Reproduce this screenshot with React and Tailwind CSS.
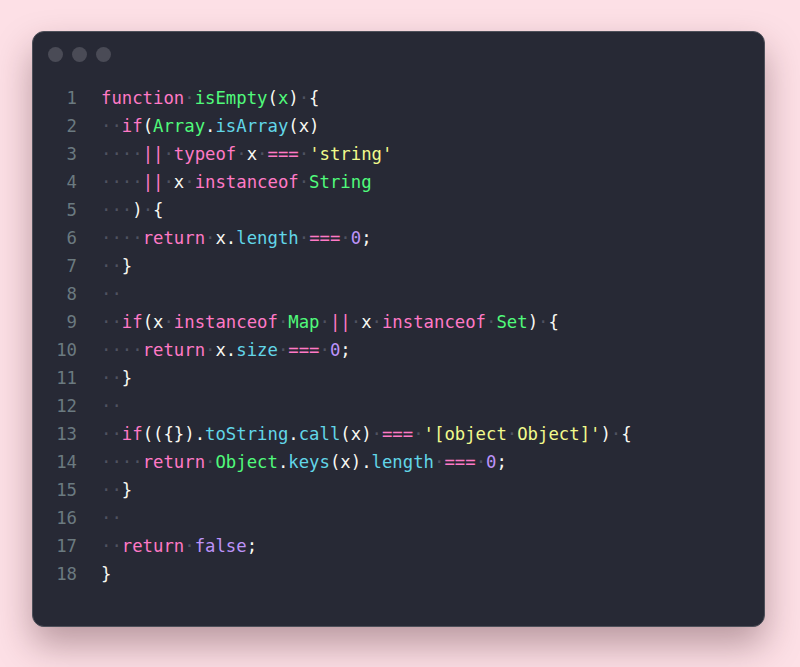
import React from "react";

const P = "#ff79c6";
const G = "#50fa7b";
const C = "#62d6e8";
const Y = "#f1fa8c";
const V = "#bd93f9";
const W = "#f8f8f2";

// each line: list of [text, color]
const lines = [
  [["function", P], [" ", W], ["isEmpty", G], ["(", W], ["x", G], [")", W], [" ", W], ["{", W]],
  [["  ", W], ["if", P], ["(", W], ["Array", G], [".", W], ["isArray", C], ["(x)", W]],
  [["    ", W], ["||", P], [" ", W], ["typeof", P], [" x ", W], ["===", P], [" ", W], ["'string'", Y]],
  [["    ", W], ["||", P], [" x ", W], ["instanceof", P], [" ", W], ["String", G]],
  [["   ) {", W]],
  [["    ", W], ["return", P], [" x.", W], ["length", C], [" ", W], ["===", P], [" ", W], ["0", V], [";", W]],
  [["  }", W]],
  [["  ", W]],
  [["  ", W], ["if", P], ["(x ", W], ["instanceof", P], [" ", W], ["Map", G], [" ", W], ["||", P], [" x ", W], ["instanceof", P], [" ", W], ["Set", G], [") {", W]],
  [["    ", W], ["return", P], [" x.", W], ["size", C], [" ", W], ["===", P], [" ", W], ["0", V], [";", W]],
  [["  }", W]],
  [["  ", W]],
  [["  ", W], ["if", P], ["(({}).", W], ["toString", C], [".", W], ["call", C], ["(x) ", W], ["===", P], [" ", W], ["'[object Object]'", Y], [") {", W]],
  [["    ", W], ["return", P], [" ", W], ["Object", G], [".", W], ["keys", C], ["(x).", W], ["length", C], [" ", W], ["===", P], [" ", W], ["0", V], [";", W]],
  [["  }", W]],
  [["  ", W]],
  [["  ", W], ["return", P], [" ", W], ["false", V], [";", W]],
  [["}", W]],
];

function Segment({ text, color }) {
  // spaces become faint middle dots
  const parts = text.split(/( )/);
  return parts.map((p, i) =>
    p === " " ? (
      <span key={i} className="text-[#4f5261]">·</span>
    ) : (
      <span key={i} style={{ color }}>{p}</span>
    )
  );
}

export default function App() {
  return (
    <div className="min-h-[667px] w-[800px] bg-[#fde0e6] pt-[31px] pl-[32px]">
      <div className="w-[733px] h-[596px] rounded-[12px] bg-[#272935] border border-[#4e505a] shadow-[0_18px_36px_rgba(60,20,30,0.35)] flex flex-col">
        <div className="flex gap-[9px] pl-[15px] pt-[15px]">
          <div className="w-[15px] h-[15px] rounded-full bg-[#4a4b56]" />
          <div className="w-[15px] h-[15px] rounded-full bg-[#4a4b56]" />
          <div className="w-[15px] h-[15px] rounded-full bg-[#4a4b56]" />
        </div>
        <div
          className="mt-[22px] text-[17.3px] leading-[28px]"
          style={{ fontFamily: '"DejaVu Sans Mono", monospace' }}
        >
          {lines.map((segs, i) => (
            <div key={i} className="flex whitespace-pre">
              <div className="w-[44px] text-right text-[#6b7a80] shrink-0">{i + 1}</div>
              <div className="pl-[24px]">
                {segs.map(([t, c], j) => (
                  <Segment key={j} text={t} color={c} />
                ))}
              </div>
            </div>
          ))}
        </div>
      </div>
    </div>
  );
}
